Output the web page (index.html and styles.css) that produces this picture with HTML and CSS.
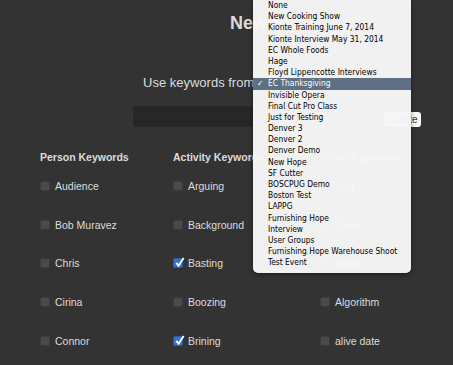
FILE: index.html
```html
<html>
<head>
<title>New Keyword Set</title>
<link rel="stylesheet" href="styles.css">
</head>
<body>
<div id="page">
<h1 class="title">New Set</h1>

<div class="source-row">
<span class="source-label">Use keywords from</span>
<span class="popup"></span>
</div>

<div class="create-row">
<div class="name-field"></div>
<div class="create-btn">Create</div>
</div>

<div class="columns">
<div class="col col-person">
<div class="col-head">Person Keywords</div>
<div class="kw"><span class="box"></span>Audience</div>
<div class="kw"><span class="box"></span>Bob Muravez</div>
<div class="kw"><span class="box"></span>Chris</div>
<div class="kw"><span class="box"></span>Cirina</div>
<div class="kw"><span class="box"></span>Connor</div>
</div>
<div class="col col-activity">
<div class="col-head">Activity Keywords</div>
<div class="kw"><span class="box"></span>Arguing</div>
<div class="kw"><span class="box"></span>Background</div>
<div class="kw"><span class="box on"><svg viewBox="0 0 12 12"><path d="M2.5 6.5 L5 9.5 L10.5 1" fill="none" stroke="#fff" stroke-width="2"/></svg></span>Basting</div>
<div class="kw"><span class="box"></span>Boozing</div>
<div class="kw"><span class="box on"><svg viewBox="0 0 12 12"><path d="M2.5 6.5 L5 9.5 L10.5 1" fill="none" stroke="#fff" stroke-width="2"/></svg></span>Brining</div>
</div>
<div class="col col-other">
<div class="col-head">Other Keywords</div>
<div class="kw"><span class="box"></span>Test</div>
<div class="kw"><span class="box"></span>Table</div>
<div class="kw"><span class="box"></span>Action</div>
<div class="kw"><span class="box"></span>Algorithm</div>
<div class="kw"><span class="box"></span>alive date</div>
</div>
</div>
</div>

<ul class="menu">
<li>None</li>
<li>New Cooking Show</li>
<li>Kionte Training June 7, 2014</li>
<li>Kionte Interview May 31, 2014</li>
<li>EC Whole Foods</li>
<li>Hage</li>
<li>Floyd Lippencotte Interviews</li>
<li class="sel"><span class="tick">&#10003;</span>EC Thanksgiving</li>
<li>Invisible Opera</li>
<li>Final Cut Pro Class</li>
<li>Just for Testing</li>
<li>Denver 3</li>
<li>Denver 2</li>
<li>Denver Demo</li>
<li>New Hope</li>
<li>SF Cutter</li>
<li>BOSCPUG Demo</li>
<li>Boston Test</li>
<li>LAPPG</li>
<li>Furnishing Hope</li>
<li>Interview</li>
<li>User Groups</li>
<li>Furnishing Hope Warehouse Shoot</li>
<li>Test Event</li>
</ul>
</body>
</html>
```

FILE: styles.css
```css
body {
margin:0;
background-color:#333333;
overflow:hidden;
}
#page {
color:#dcdcdc;
font-family:"Liberation Sans", Arial, sans-serif;
}
.title {
margin:0;
padding:12px 0 0 230px;
font-size:18px;
font-weight:bold;
line-height:22px;
white-space:nowrap;
}
.source-row {
display:flex;
align-items:center;
gap:3px;
padding:38px 0 0 143px;
height:20px;
font-size:13px;
}
.popup {
width:40px;
height:14px;
background:#5a5a5a;
border-radius:3px;
}
.create-row {
display:flex;
align-items:flex-end;
gap:4px;
padding:14px 0 0 133px;
}
.name-field {
width:247px;
height:21px;
background:#272727;
}
.create-btn {
width:37px;
height:15px;
background:#fafafa;
border-radius:3px;
color:#333;
font-size:10px;
line-height:15px;
text-align:center;
}
.columns {
display:grid;
grid-template-columns:133px 147px auto;
padding:23px 0 0 40px;
}
.col-head {
font-size:10.5px;
font-weight:bold;
line-height:14px;
height:14px;
white-space:nowrap;
}
.kw {
display:flex;
align-items:center;
gap:5px;
height:38.6px;
font-size:10.5px;
white-space:nowrap;
}
.col-head + .kw {
margin-top:3px;
}
.box {
position:relative;
width:10px;
height:10px;
border-radius:2px;
background:#4a4a4a;
border:1px solid #3c3c3c;
box-sizing:border-box;
}
.box.on {
background:#3f70c8;
border-color:#2e5aa8;
}
.box svg {
position:absolute;
left:0;
top:-2px;
width:11px;
height:11px;
}
.menu {
position:absolute;
left:253px;
top:0;
width:158px;
margin:0;
padding:0 0 4px 0;
list-style:none;
background:rgba(246,246,246,0.975);
border-radius:0 0 5px 5px;
box-shadow:0 1px 4px rgba(0,0,0,0.5);
font-family:"DejaVu Sans Condensed", "DejaVu Sans", sans-serif;
font-size:8.4px;
color:#000;
}
.menu li {
height:11.2px;
line-height:11.2px;
padding-left:15px;
white-space:nowrap;
position:relative;
}
.menu li.sel {
background:#5f6f84;
color:#fff;
}
.tick {
position:absolute;
left:4px;
}
```
